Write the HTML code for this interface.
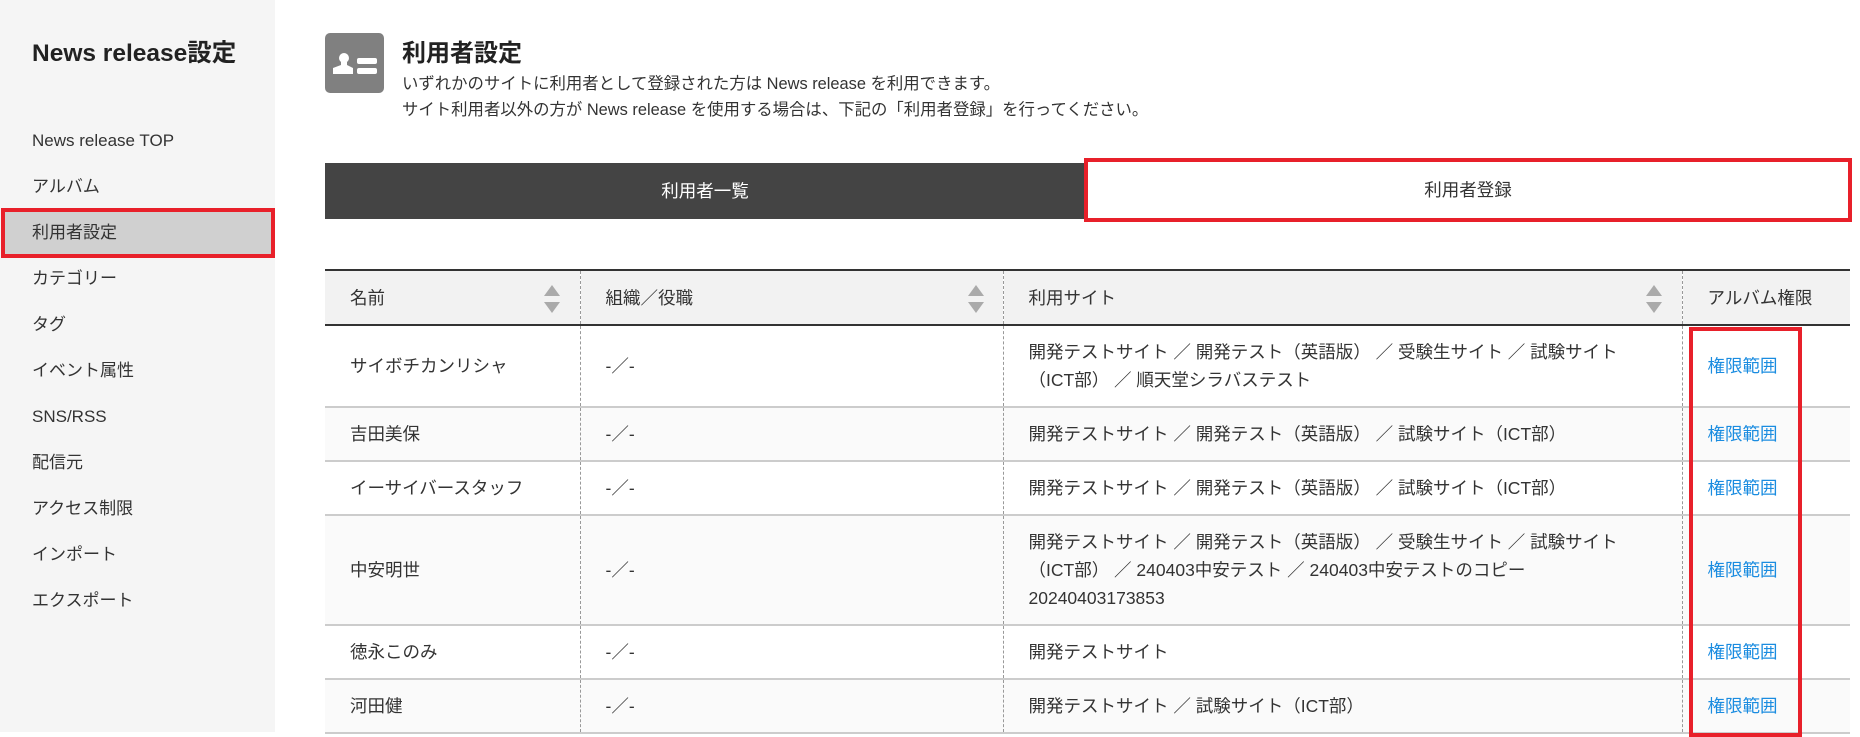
<!DOCTYPE html>
<html><head><meta charset="utf-8"><style>
*{margin:0;padding:0;box-sizing:border-box}
body{width:1860px;height:732px;overflow:hidden;background:#fff;font-family:"Liberation Sans","Noto Sans CJK JP",sans-serif;color:#333;position:relative}
.side{position:absolute;left:0;top:0;width:275px;height:732px;background:#f5f5f5}
.side h1{position:absolute;left:32px;top:34px;font-size:24.5px;font-weight:bold;color:#222}
.nav{position:absolute;left:32px;font-size:17px;color:#333;line-height:20px}
.hl{position:absolute;left:1px;top:208px;width:274px;height:50px;background:#d0d0d0;border:4px solid #e8202a}
.icon{position:absolute;left:325px;top:33px;width:59px;height:60px;background:#808080;border-radius:5px}
.h2{position:absolute;left:402px;top:33px;font-size:24px;font-weight:bold;color:#222}
.desc{position:absolute;left:402px;font-size:16.4px;color:#333;white-space:nowrap}
.tab1{position:absolute;left:325px;top:163px;width:760px;height:56px;background:#444;color:#fff;font-size:17.5px;text-align:center;line-height:56px}
.tab2{position:absolute;left:1084px;top:158px;width:768px;height:64px;border:4px solid #e8202a;background:#fff;color:#333;font-size:17.5px;text-align:center;line-height:56px}
table{position:absolute;left:325px;top:269px;width:1525px;border-collapse:collapse;font-size:17.5px;color:#333}
th{background:#f2f2f2;font-weight:normal;text-align:left;height:55px;border-top:2px solid #333;border-bottom:2px solid #333;position:relative}
td{line-height:28px;border-bottom:2px solid #ccc}
th,td{padding:0 0 0 25px;border-left:1px dashed #999}
th:first-child,td:first-child{border-left:none}
tr.a td{background:#fff}tr.b td{background:#fafafa}
a{color:#1a8ce0;text-decoration:none}
.ar{position:absolute;top:14px;width:0;height:0}
.up{border-left:8px solid transparent;border-right:8px solid transparent;border-bottom:11px solid #aaa}
.dn{border-left:8px solid transparent;border-right:8px solid transparent;border-top:11px solid #aaa;top:31px}
.red{position:absolute;left:1689px;top:327px;width:113px;height:410px;border:4px solid #e8202a}
</style></head><body>
<div class="side">
<h1>News release設定</h1>
<div class="hl"></div>
<div class="nav" style="top:131px">News release TOP</div>
<div class="nav" style="top:177px">アルバム</div>
<div class="nav" style="top:223px">利用者設定</div>
<div class="nav" style="top:269px">カテゴリー</div>
<div class="nav" style="top:315px">タグ</div>
<div class="nav" style="top:361px">イベント属性</div>
<div class="nav" style="top:407px">SNS/RSS</div>
<div class="nav" style="top:453px">配信元</div>
<div class="nav" style="top:499px">アクセス制限</div>
<div class="nav" style="top:545px">インポート</div>
<div class="nav" style="top:591px">エクスポート</div>
</div>
<div class="icon"><svg width="59" height="60" viewBox="0 0 59 60"><circle cx="19" cy="25" r="5" fill="#fff"/><path d="M16 29h6v3l6 3v6H8v-6l8-3z" fill="#fff"/><rect x="32" y="25" width="20" height="6" rx="2" fill="#fff"/><rect x="32" y="35" width="20" height="6" rx="2" fill="#fff"/></svg></div>
<div class="h2">利用者設定</div>
<div class="desc" style="top:70px">いずれかのサイトに利用者として登録された方は News release を利用できます。</div>
<div class="desc" style="top:96px">サイト利用者以外の方が News release を使用する場合は、下記の「利用者登録」を行ってください。</div>
<div class="tab1">利用者一覧</div>
<div class="tab2">利用者登録</div>
<table>
<colgroup><col style="width:255px"><col style="width:423px"><col style="width:679px"><col></colgroup>
<tr><th>名前<span class="ar up" style="left:219px"></span><span class="ar dn" style="left:219px"></span></th><th>組織／役職<span class="ar up" style="left:387px"></span><span class="ar dn" style="left:387px"></span></th><th>利用サイト<span class="ar up" style="left:642px"></span><span class="ar dn" style="left:642px"></span></th><th>アルバム権限</th></tr>
<tr class="a" style="height:82px"><td>サイボチカンリシャ</td><td>-／-</td><td>開発テストサイト ／ 開発テスト（英語版） ／ 受験生サイト ／ 試験サイト<br>（ICT部） ／ 順天堂シラバステスト</td><td><a>権限範囲</a></td></tr>
<tr class="b" style="height:54px"><td>吉田美保</td><td>-／-</td><td>開発テストサイト ／ 開発テスト（英語版） ／ 試験サイト（ICT部）</td><td><a>権限範囲</a></td></tr>
<tr class="a" style="height:54px"><td>イーサイバースタッフ</td><td>-／-</td><td>開発テストサイト ／ 開発テスト（英語版） ／ 試験サイト（ICT部）</td><td><a>権限範囲</a></td></tr>
<tr class="b" style="height:110px"><td>中安明世</td><td>-／-</td><td>開発テストサイト ／ 開発テスト（英語版） ／ 受験生サイト ／ 試験サイト<br>（ICT部） ／ 240403中安テスト ／ 240403中安テストのコピー<br>20240403173853</td><td><a>権限範囲</a></td></tr>
<tr class="a" style="height:54px"><td>徳永このみ</td><td>-／-</td><td>開発テストサイト</td><td><a>権限範囲</a></td></tr>
<tr class="b" style="height:54px"><td>河田健</td><td>-／-</td><td>開発テストサイト ／ 試験サイト（ICT部）</td><td><a>権限範囲</a></td></tr>
</table>
<div class="red"></div>
</body></html>
